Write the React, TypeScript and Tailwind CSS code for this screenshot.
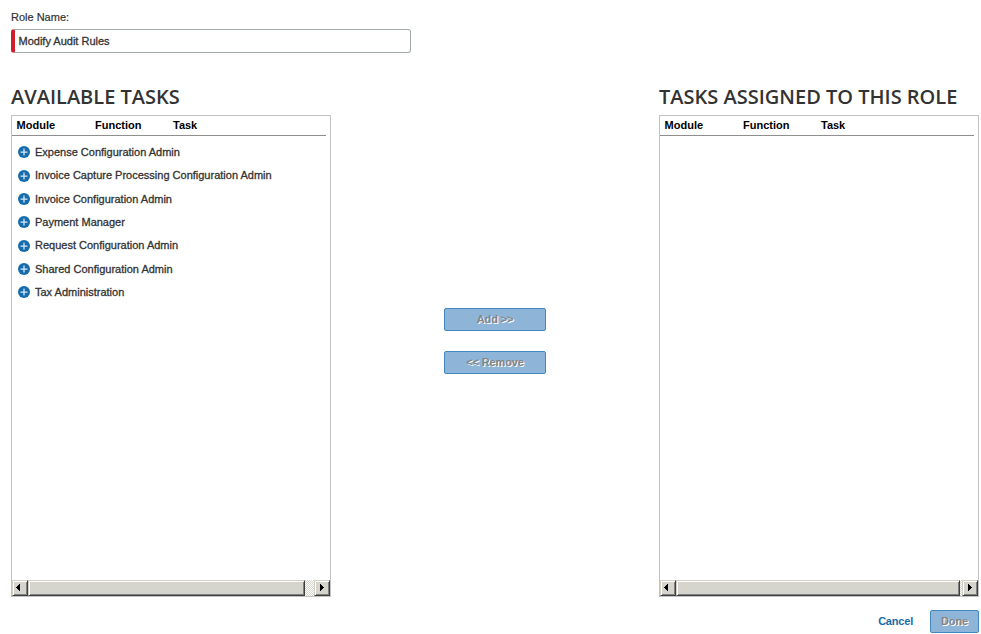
const modules = [
  "Expense Configuration Admin",
  "Invoice Capture Processing Configuration Admin",
  "Invoice Configuration Admin",
  "Payment Manager",
  "Request Configuration Admin",
  "Shared Configuration Admin",
  "Tax Administration",
];

const bevel =
  "border border-t-[#d4d0c8] border-l-[#d4d0c8] border-r-[#404040] border-b-[#404040] bg-[#d5d5cd] shadow-[inset_1px_1px_0_#ffffff,inset_-1px_-1px_0_#808080]";

function Arrow({ right = false }: { right?: boolean }) {
  return (
    <div className={`flex h-4 w-4 shrink-0 items-start pt-[3px] ${right ? "pl-[5px]" : "pl-[3px]"} ${bevel}`}>
      <svg
        width="4"
        height="7"
        viewBox="0 0 4 7"
        shapeRendering="crispEdges"
        className={right ? "rotate-180" : ""}
      >
        <path d="M3 0h1v7H3zM2 1h1v5H2zM1 2h1v3H1zM0 3h1v1H0z" fill="#000" />
      </svg>
    </div>
  );
}

function Plus() {
  return (
    <svg width="12" height="12" viewBox="0 0 12 12" className="shrink-0">
      <circle cx="6" cy="6" r="6" fill="#156bab" />
      <path d="M6 2.5v7M2.5 6h7" stroke="#dcecf7" strokeWidth="1.25" />
    </svg>
  );
}

function TaskPanel({ title, items, wide = false }: { title: string; items: string[]; wide?: boolean }) {
  return (
    <section className="w-[320px]">
      <h2 className="h-[29px] whitespace-nowrap font-['Open_Sans',sans-serif] text-[20px] leading-[21px] font-semibold text-[#333]">
        {title}
      </h2>
      <div className="flex h-[482px] flex-col border border-[#c3c3c3]">
        <div className="mr-1 flex h-5 border-b border-[#8f8f8f] pl-[4.6px] text-[11px] leading-[19px] font-bold text-black">
          <span className="w-[78.4px]">Module</span>
          <span className="w-[78px]">Function</span>
          <span>Task</span>
        </div>
        <ul className="flex-1 pt-[4.5px] pl-1.5 [-webkit-text-stroke:0.3px_currentColor]">
          {items.map((item) => (
            <li key={item} className="flex h-[23.38px] items-center gap-[5px] whitespace-nowrap">
              <Plus />
              <span>{item}</span>
            </li>
          ))}
        </ul>
        <div className="flex h-4 bg-[repeating-conic-gradient(#d5d5cd_0_25%,#ffffff_0_50%)] bg-[length:2px_2px]">
          <Arrow />
          <div className={`h-4 ${wide ? "w-[284px]" : "w-[277px]"} ${bevel}`} />
          <div className="flex-1" />
          <Arrow right />
        </div>
      </div>
    </section>
  );
}

const disabled =
  "rounded-[2px] border border-[#4288bf] bg-[#8eb5d7] text-center text-[11px] leading-[21px] font-bold tracking-[-0.15px] text-[#858585] [text-shadow:1px_1px_0_#fff]";

export default function App() {
  return (
    <main className="h-[634px] w-[981px] overflow-hidden bg-white pt-[10px] pl-[11px] font-['Liberation_Sans',Arial,sans-serif] text-[11px] text-[#333]">
      <label className="block h-[19px] leading-[15px] [-webkit-text-stroke:0.2px_currentColor]">Role Name:</label>
      <div className="h-6 w-[400px] rounded-[3px] border border-l-4 border-[#a4abab] border-l-[#d01f2a] pl-[3.5px] leading-[22px] [-webkit-text-stroke:0.3px_currentColor]">
        Modify Audit Rules
      </div>
      <div className="mt-[33px] flex w-[968px] justify-between">
        <TaskPanel title="AVAILABLE TASKS" items={modules} />
        <div className="flex w-[102px] flex-col gap-5 pt-[222px]">
          <button className={`h-[23px] ${disabled}`}>Add &gt;&gt;</button>
          <button className={`h-[23px] ${disabled}`}>&lt;&lt; Remove</button>
        </div>
        <TaskPanel title="TASKS ASSIGNED TO THIS ROLE" items={[]} wide />
      </div>
      <div className="mt-[13px] flex w-[968px] items-center justify-end gap-[17px]">
        <a className="font-bold tracking-[-0.2px] text-[#156bab]">Cancel</a>
        <button className={`h-[23px] w-[49px] ${disabled}`}>Done</button>
      </div>
    </main>
  );
}
